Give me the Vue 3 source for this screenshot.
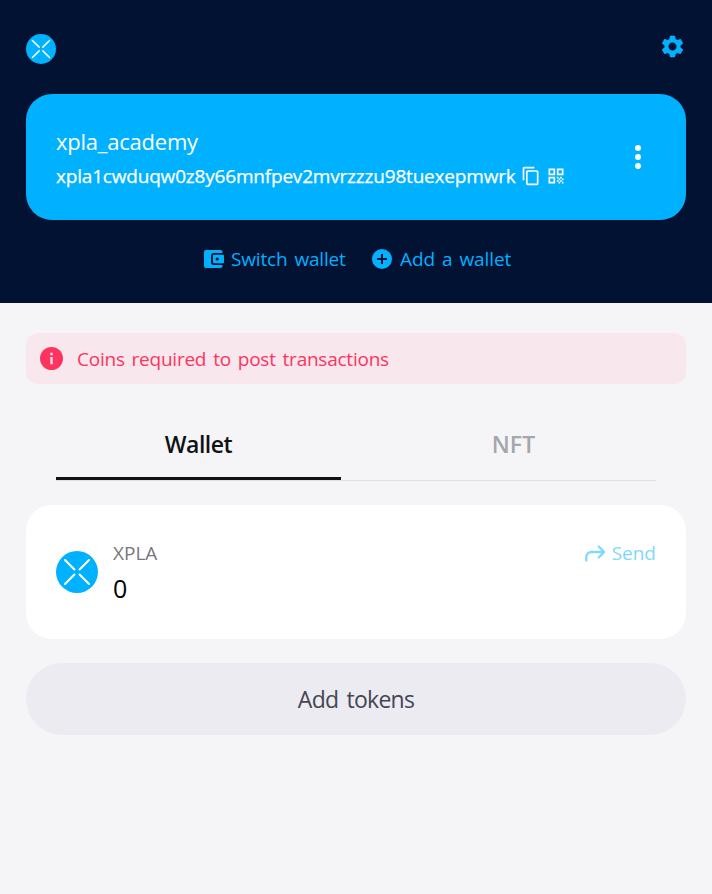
<script setup>
import { h } from 'vue'

const wallet = {
  name: 'xpla_academy',
  address: 'xpla1cwduqw0z8y66mnfpev2mvrzzzu98tuexepmwrk',
}
const tabs = [
  { label: 'Wallet', active: true },
  { label: 'NFT', active: false },
]
const Logo = () =>
  h('svg', { viewBox: '0 0 42 42' }, [
    h('circle', { cx: 21, cy: 21, r: 21, fill: '#00b1ff' }),
    h('path', {
      d: 'M9 9l9.4 9.4M33 9l-9.4 9.4M9 33l9.4-9.4M33 33l-9.4-9.4',
      stroke: '#fff',
      'stroke-width': 2.1,
      'stroke-linecap': 'round',
      fill: 'none',
    }),
  ])
</script>

<template>
  <div class="app">
    <header class="header">
      <div class="topbar">
        <Logo class="brand" />
        <svg class="gear" viewBox="0 0 24 24"><path fill="currentColor" d="M19.14 12.94c.04-.3.06-.61.06-.94 0-.32-.02-.64-.07-.94l2.03-1.58c.18-.14.23-.41.12-.61l-1.92-3.32c-.12-.22-.37-.29-.59-.22l-2.39.96c-.5-.38-1.03-.7-1.62-.94l-.36-2.54c-.04-.24-.24-.41-.48-.41h-3.84c-.24 0-.43.17-.47.41l-.36 2.54c-.59.24-1.13.57-1.62.94l-2.39-.96c-.22-.08-.47 0-.59.22L2.74 8.87c-.12.21-.08.47.12.61l2.03 1.58c-.05.3-.09.63-.09.94s.02.64.07.94l-2.03 1.58c-.18.14-.23.41-.12.61l1.92 3.32c.12.22.37.29.59.22l2.39-.96c.5.38 1.03.7 1.62.94l.36 2.54c.05.24.24.41.48.41h3.84c.24 0 .44-.17.47-.41l.36-2.54c.59-.24 1.13-.56 1.62-.94l2.39.96c.22.08.47 0 .59-.22l1.92-3.32c.12-.22.07-.47-.12-.61l-2.01-1.58zM12 15.6c-1.98 0-3.6-1.62-3.6-3.6s1.62-3.6 3.6-3.6 3.6 1.62 3.6 3.6-1.62 3.6-3.6 3.6z"/></svg>
      </div>

      <section class="account">
        <div class="identity">
          <div class="name">{{ wallet.name }}</div>
          <div class="address-row">
            <span class="address">{{ wallet.address }}</span>
            <svg class="copy" viewBox="0 0 24 24"><path fill="currentColor" d="M16 1H4c-1.1 0-2 .9-2 2v14h2V3h12V1zm3 4H8c-1.1 0-2 .9-2 2v14c0 1.1.9 2 2 2h11c1.1 0 2-.9 2-2V7c0-1.1-.9-2-2-2zm0 16H8V7h11v14z"/></svg>
            <svg class="qr" viewBox="0 0 24 24"><path fill="currentColor" d="M3 11h8V3H3v8zm2-6h4v4H5V5zM3 21h8v-8H3v8zm2-6h4v4H5v-4zM13 3v8h8V3h-8zm6 6h-4V5h4v4zM19 19h2v2h-2zM13 13h2v2h-2zM15 15h2v2h-2zM13 17h2v2h-2zM15 19h2v2h-2zM17 17h2v2h-2zM17 13h2v2h-2zM19 15h2v2h-2z"/></svg>
          </div>
        </div>
        <div class="more"><i></i><i></i><i></i></div>
      </section>

      <nav class="actions">
        <a class="action">
          <svg class="wallet-icon" viewBox="0 0 20 18"><path fill="currentColor" fill-rule="evenodd" d="M2 0h14.500a2 2 0 0 1 2 2v1H10a3 3 0 0 0-3 3v6a3 3 0 0 0 3 3h8.500v1a2 2 0 0 1-2 2H2a2 2 0 0 1-2-2V2a2 2 0 0 1 2-2zM10 4.700h9a1 1 0 0 1 1 1v6.600a1 1 0 0 1-1 1h-9a1 1 0 0 1-1-1V5.700a1 1 0 0 1 1-1zM13.200 7.400a1.600 1.600 0 1 0 0 3.200a1.600 1.600 0 0 0 0-3.200z"/></svg>
          <span class="switch-text">Switch wallet</span>
        </a>
        <a class="action">
          <svg class="add-icon" viewBox="0 0 20 20"><path fill="currentColor" fill-rule="evenodd" d="M10 0a10 10 0 1 0 0 20a10 10 0 0 0 0-20zM9 5h2v4h4v2h-4v4H9v-4H5V9h4z"/></svg>
          <span class="add-text">Add a wallet</span>
        </a>
      </nav>
    </header>

    <main class="content">
      <div class="alert">
        <svg class="info" viewBox="0 0 22 22"><circle cx="11" cy="11" r="11" fill="currentColor"/><path fill="#f8e8ed" d="M9.900 5.600h2.200v2.200H9.900zM9.900 9.600h2.200v6.800H9.900z"/></svg>
        <span class="alert-text">Coins required to post transactions</span>
      </div>

      <div class="tabs">
        <div v-for="tab in tabs" :key="tab.label" class="tab" :class="{ active: tab.active }">
          <span>{{ tab.label }}</span>
        </div>
      </div>

      <section class="asset">
        <Logo class="token" />
        <div class="asset-info">
          <span class="symbol">XPLA</span>
          <span class="amount">0</span>
        </div>
        <a class="send">
          <svg class="send-icon" viewBox="0 0 21 17"><path fill="none" stroke="currentColor" stroke-width="2.300" stroke-linecap="round" stroke-linejoin="round" d="M1.300 15.500V12a5 5 0 0 1 5-5H19M13.700 1.500L19.200 7l-5.500 5.500"/></svg>
          <span>Send</span>
        </a>
      </section>

      <button class="add-tokens">Add tokens</button>
    </main>
  </div>
</template>

<style>
body {
  background: #f5f5f8;
}
</style>

<style scoped>
.app {
  min-height: 894px;
  background: #f5f5f8;
  font-family: 'Open Sans', 'Noto Sans', sans-serif;
  font-size: 19px;
  line-height: 26px;
  white-space: nowrap;
}
svg {
  display: block;
  flex: none;
}
.header {
  height: 303px;
  box-sizing: border-box;
  padding: 34px 26px 0;
  background: #021233;
  color: #00b1ff;
}
.topbar {
  display: flex;
  justify-content: space-between;
  height: 60px;
}
.brand {
  width: 30px;
  height: 30px;
}
.gear {
  width: 27px;
  height: 27px;
  margin-top: -1px;
}
.account {
  display: flex;
  justify-content: space-between;
  height: 126px;
  box-sizing: border-box;
  padding: 32px 45px 0 30px;
  border-radius: 26px;
  background: #00b1ff;
  color: #fff;
}
.name {
  height: 35px;
  font-size: 22px;
  line-height: 30px;
  letter-spacing: -0.23px;
}
.address-row {
  display: flex;
  align-items: center;
  height: 30px;
}
.address {
  width: 460px;
  letter-spacing: -0.19px;
  -webkit-text-stroke: 0.25px currentColor;
}
.copy {
  width: 20px;
  height: 20px;
  margin-left: 5px;
}
.qr {
  width: 20px;
  height: 20px;
  margin-left: 5px;
}
.more {
  display: flex;
  flex-direction: column;
  gap: 3px;
  padding-top: 19px;
}
.more i {
  width: 6px;
  height: 6px;
  border-radius: 50%;
  background: #fff;
}
.actions {
  display: flex;
  gap: 26px;
  padding: 26px 0 0 178px;
}
.action {
  display: flex;
  align-items: center;
}
.wallet-icon {
  width: 20px;
  height: 18px;
  margin-right: 7px;
}
.switch-text {
  width: 115px;
  letter-spacing: -0.17px;
  word-spacing: 2.2px;
}
.add-icon {
  width: 20px;
  height: 20px;
  margin-right: 8px;
}
.add-text {
  letter-spacing: -0.1px;
  word-spacing: 2.2px;
}
.content {
  padding: 30px 26px 0;
}
.alert {
  display: flex;
  align-items: center;
  height: 51px;
  box-sizing: border-box;
  padding-left: 14px;
  border-radius: 12px;
  background: #f8e8ed;
  color: #ff335f;
}
.alert-text {
  letter-spacing: -0.24px;
  word-spacing: 2.2px;
}
.info {
  width: 23px;
  height: 23px;
  margin-right: 14px;
}
.tabs {
  display: flex;
  gap: 30px;
  margin: 24px 30px 0;
  height: 73px;
  box-sizing: border-box;
  border-bottom: 1px solid #dfe0e3;
}
.tab {
  width: 285px;
  height: 72px;
  box-sizing: border-box;
  padding-top: 20px;
  text-align: center;
  font-size: 23px;
  font-weight: 600;
  line-height: 32px;
  letter-spacing: -0.5px;
  color: #a6a6ad;
}
.tab + .tab {
  letter-spacing: 0;
}
.tab.active {
  color: #101314;
  border-bottom: 3px solid #101314;
}
.asset {
  display: flex;
  height: 134px;
  margin-top: 24px;
  box-sizing: border-box;
  padding: 35px 30px 0;
  border-radius: 26px;
  background: #fff;
}
.token {
  width: 42px;
  height: 42px;
  margin: 11px 15px 0 0;
}
.asset-info {
  display: flex;
  flex-direction: column;
  flex: 1;
}
.symbol {
  color: #77777c;
}
.amount {
  color: #000;
  font-size: 25px;
  line-height: 44px;
}
.send {
  display: flex;
  height: 26px;
  color: #7fd8ff;
}
.send-icon {
  width: 21px;
  height: 17px;
  margin: 5px 6px 0 0;
}
.add-tokens {
  display: block;
  width: 100%;
  height: 72px;
  margin-top: 24px;
  padding: 0;
  border: 0;
  border-radius: 36px;
  background: #ecebf2;
  color: #444653;
  font: 400 23px 'Open Sans', 'Noto Sans', sans-serif;
  letter-spacing: -0.75px;
  word-spacing: 3px;
}
</style>
